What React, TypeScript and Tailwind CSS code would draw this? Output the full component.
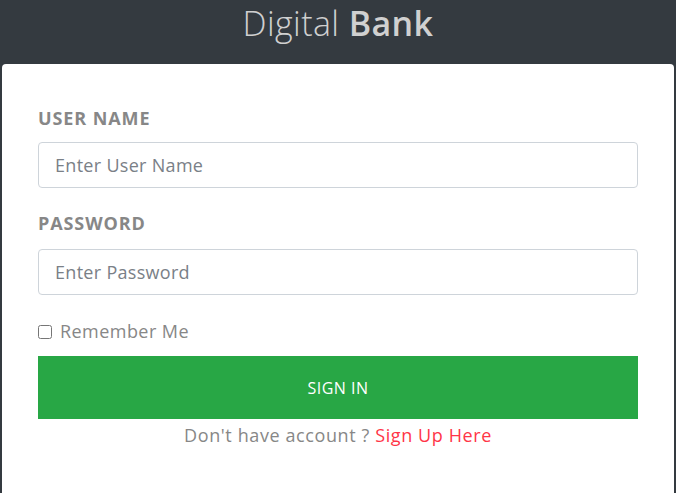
import { useState } from "react"

const App = () => {
  const [remember, setRemember] = useState(false)

  return (
    <div className="min-h-screen bg-[#343a40] font-['Open_Sans','Segoe_UI',sans-serif]">
      <header className="h-16 flex justify-center">
        <h1 className="text-[34px] leading-none pt-[6px] text-[#d0d0d0] font-light tracking-[0.4px]">
          Digital <span className="font-semibold">Bank</span>
        </h1>
      </header>

      <div className="mx-[2px] bg-white rounded-t-[4px] px-9 pt-[41px] pb-16">
        <form className="flex flex-col" onSubmit={(e) => e.preventDefault()}>
          <label className="text-[18px] font-bold text-[#878787] leading-[27px] tracking-[0.9px] mb-[10px]">USER NAME</label>
          <input
            className="h-[46px] w-full border border-[#ced4da] rounded-[4px] px-4 text-[18px] tracking-[0.3px] text-[#495057] placeholder-[#7a8087] outline-none"
            placeholder="Enter User Name"
          />

          <label className="text-[18px] font-bold text-[#878787] leading-[27px] tracking-[0.9px] mt-[22px] mb-[12px]">PASSWORD</label>
          <input
            type="password"
            className="h-[46px] w-full border border-[#ced4da] rounded-[4px] px-4 text-[18px] tracking-[0.3px] text-[#495057] placeholder-[#7a8087] outline-none"
            placeholder="Enter Password"
          />

          <label className="flex items-center gap-[8px] mt-[23px] text-[18px] text-[#878787] leading-[27px] tracking-[0.45px]">
            <input
              type="checkbox"
              checked={remember}
              onChange={() => setRemember(!remember)}
              className="w-[14px] h-[14px] m-0"
            />
            Remember Me
          </label>

          <button className="mt-[11px] h-[63px] w-full bg-[#28a745] text-white text-[16px] tracking-[0.5px]">
            SIGN IN
          </button>

          <p className="text-center text-[18px] text-[#878787] leading-[27px] tracking-[0.6px] mt-[3px]">
            Don't have account ? <a href="#" className="text-[#ff3547]">Sign Up Here</a>
          </p>
        </form>
      </div>
    </div>
  )
}

export default App
